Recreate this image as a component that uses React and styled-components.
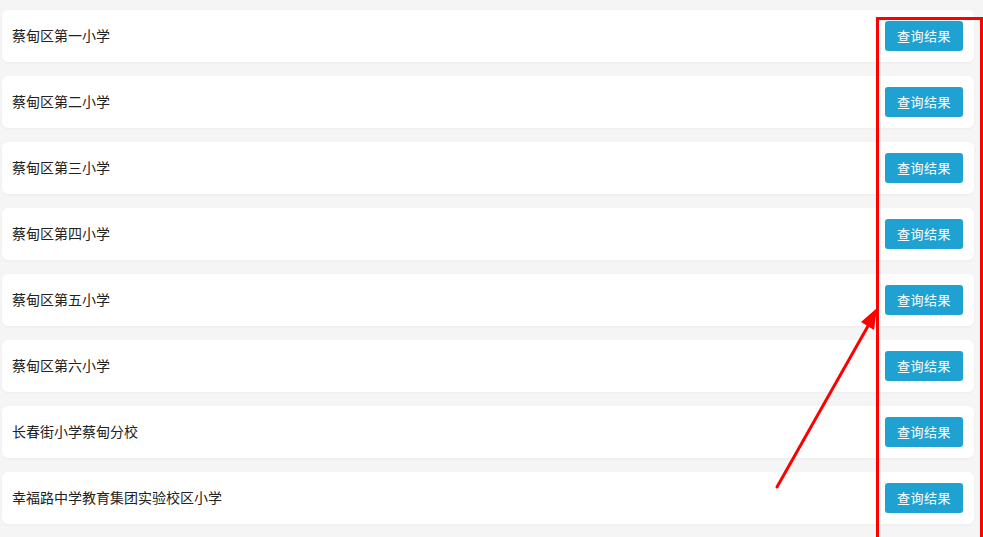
import React from "react";
import styled, { createGlobalStyle } from "styled-components";

const Global = createGlobalStyle`
  html, body { margin: 0; padding: 0; background: #f5f5f5; }
  body { font-family: "Microsoft YaHei", "Noto Sans CJK SC", "Liberation Sans", sans-serif; overflow: hidden; }
`;

const Page = styled.div`
  position: relative;
  width: 983px;
  height: 537px;
  overflow: hidden;
`;

const List = styled.div`
  display: flex;
  flex-direction: column;
  gap: 14px;
  padding: 10px 9px 0 2px;
`;

const Card = styled.div`
  display: flex;
  align-items: center;
  justify-content: space-between;
  height: 52px;
  box-sizing: border-box;
  padding: 0 11px 0 10px;
  background: #ffffff;
  border-radius: 6px;
  box-shadow: 0 1px 3px rgba(0, 0, 0, 0.04);
`;

const Name = styled.span`
  font-size: 14px;
  color: #222;
  line-height: 20px;
  margin-bottom: 2px;
`;

const Button = styled.button`
  width: 78px;
  height: 30px;
  border: none;
  border-radius: 3px;
  background: #1fa2d2;
  color: #fff;
  font-family: inherit;
  font-size: 13px;
  letter-spacing: 0.5px;
  padding: 0 0 2px;
  cursor: pointer;
`;

const Overlay = styled.svg`
  position: absolute;
  left: 0;
  top: 0;
  pointer-events: none;
`;

const schools = [
  "蔡甸区第一小学",
  "蔡甸区第二小学",
  "蔡甸区第三小学",
  "蔡甸区第四小学",
  "蔡甸区第五小学",
  "蔡甸区第六小学",
  "长春街小学蔡甸分校",
  "幸福路中学教育集团实验校区小学",
];

export default function App() {
  return (
    <Page>
      <Global />
      <List>
        {schools.map((s) => (
          <Card key={s}>
            <Name>{s}</Name>
            <Button>查询结果</Button>
          </Card>
        ))}
      </List>
      <Overlay width="983" height="537" viewBox="0 0 983 537">
        <rect x="877.5" y="18.5" width="104" height="530" fill="none" stroke="#ff0000" strokeWidth="3" />
        <line x1="777" y1="487" x2="868" y2="326" stroke="#ff0000" strokeWidth="3" strokeLinecap="round" />
        <polygon points="877,308 874,330 861,322" fill="#ff0000" />
      </Overlay>
    </Page>
  );
}
